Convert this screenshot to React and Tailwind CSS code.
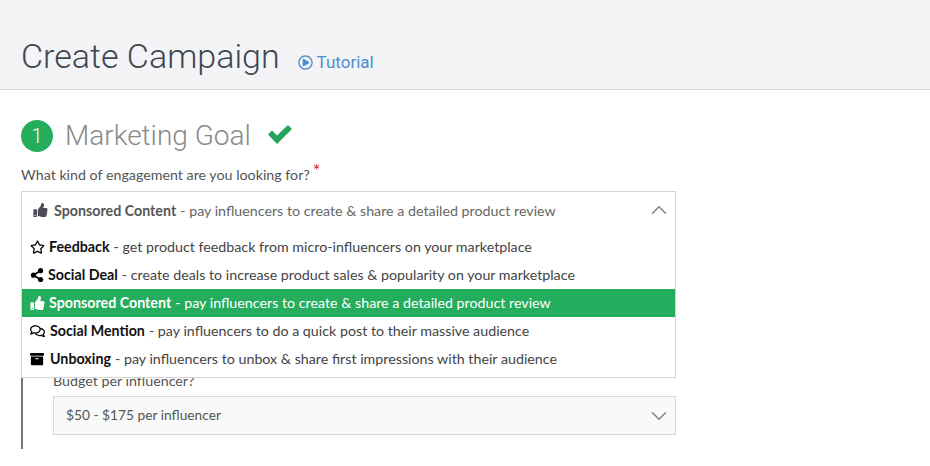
import { FaArchive, FaRegComments, FaRegPlayCircle, FaRegStar, FaShareAlt, FaThumbsUp } from "react-icons/fa";
import { ChevronDown, ChevronUp } from "lucide-react";

const options = [
  { icon: FaRegStar, name: "Feedback", text: "get product feedback from micro-influencers on your marketplace", gap: "w-[15px] mr-[4px]" },
  { icon: FaShareAlt, name: "Social Deal", text: "create deals to increase product sales & popularity on your marketplace", gap: "w-[14px] mr-[4px]" },
  { icon: FaThumbsUp, name: "Sponsored Content", text: "pay influencers to create & share a detailed product review", gap: "w-[15px] mr-[4px]", active: true },
  { icon: FaRegComments, name: "Social Mention", text: "pay influencers to do a quick post to their massive audience", gap: "w-[15px] mr-[5px]" },
  { icon: FaArchive, name: "Unboxing", text: "pay influencers to unbox & share first impressions with their audience", gap: "w-[14px] mr-[6px]" },
];

export default function App() {
  return (
    <div className="w-[930px] h-[466px] overflow-hidden bg-white font-['Lato',sans-serif]">
      <header className="h-[90px] bg-[#f4f4f6] border-b border-[#d6d6d8] pl-[21px] pt-[35px] flex items-start">
        <h1 className="font-['Roboto',sans-serif] font-light text-[34px] leading-[42px] text-[#3d4752]">Create Campaign</h1>
        <a className="ml-[18px] mt-[16px] flex items-center text-[#4a8fd3] font-['Roboto',sans-serif] text-[17px] leading-[22px]">
          <FaRegPlayCircle className="text-[15px] mr-[4px]" />
          Tutorial
        </a>
      </header>

      <main className="pl-[21px] w-[676px]">
        <div className="flex items-center mt-[30px] h-[32px]">
          <span className="w-[32px] h-[32px] rounded-full bg-[#24ad5c] text-white flex items-center justify-center font-['Roboto',sans-serif] font-light text-[20px]">1</span>
          <h2 className="ml-[12px] font-['Roboto',sans-serif] font-light text-[28px] leading-[32px] text-[#8a8a8a]">Marketing Goal</h2>
          <svg viewBox="0 0 24 19" className="ml-[17px] -mt-[3px] w-[24px] h-[19px] text-[#24a35a]" fill="currentColor">
            <path d="M0 9.6 4 5.6 9 10.6 20 0 24 4 9 19Z" />
          </svg>
        </div>

        <label className="block mt-[13px] h-[20px] text-[14.25px] leading-[20px] text-[#555]">
          What kind of engagement are you looking for?
          <span className="ml-[3px] text-[18px] leading-[10px] text-[#e0122f] relative -top-[3px]">*</span>
        </label>

        <div className="relative mt-[6px] h-[36px]">
          {/* open select, menu lies over the fields below */}
          <div className="absolute z-10 inset-x-0 top-0 h-[187px] border border-[#d4d4d4] bg-white">
            <div className="h-[36px] pl-[11px] pr-[3px] flex items-center text-[14.25px] text-[#666]">
              <FaThumbsUp className="w-[15px] mr-[6px] text-[#4b4b55]" />
              <span className="pt-[1px] font-bold text-[#555]">Sponsored Content</span>
              <span className="pt-[1px] ml-[4px]">- pay influencers to create & share a detailed product review</span>
              <ChevronUp className="ml-auto w-[26px] h-[26px] text-[#888]" strokeWidth={1.5} />
            </div>
            <ul className="pt-[5px]">
              {options.map((o) => {
                const Icon = o.icon;
                return (
                  <li
                    key={o.name}
                    className={
                      "h-[28px] pl-[8px] flex items-center text-[14.25px] " +
                      (o.active ? "bg-[#24ad5c] text-white" : "text-[#444]")
                    }
                  >
                    <Icon className={o.gap + " " + (o.active ? "text-white" : "text-black")} />
                    <span className={"font-bold " + (o.active ? "text-white" : "text-[#111]")}>{o.name}</span>
                    <span className="ml-[4px]">- {o.text}</span>
                  </li>
                );
              })}
            </ul>
          </div>
        </div>

        <div className="border-l-2 border-[#757575] h-[222px] pl-[30px] pt-[144px]">
          <p className="text-[14.25px] leading-[20px] text-[#555]">Budget per influencer?</p>
          <div className="mt-[5px] h-[39px] border border-[#d9d9d9] bg-[#f9f9f9] pl-[12px] pr-[3px] flex items-center text-[13.75px] text-[#555]">
            $50 - $175 per influencer
            <ChevronDown className="ml-auto w-[26px] h-[26px] text-[#888]" strokeWidth={1.5} />
          </div>
        </div>
      </main>
    </div>
  );
}
